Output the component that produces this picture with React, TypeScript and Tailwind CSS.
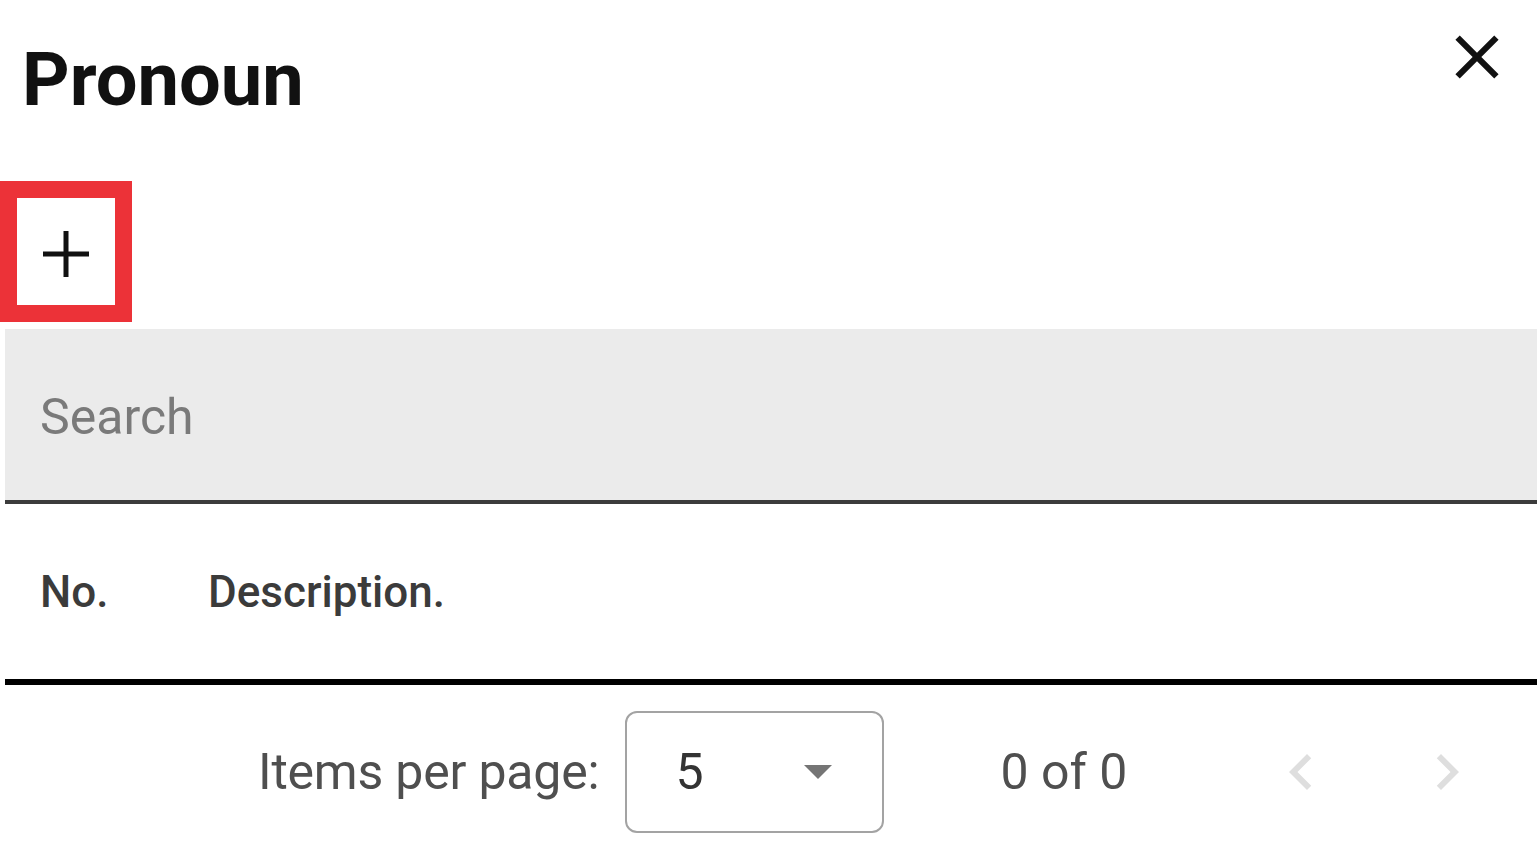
import React from "react";

function CloseIcon() {
  return (
    <svg viewBox="0 0 24 24" className="h-[74px] w-[74px] fill-[#111]">
      <path d="M19 6.41L17.59 5 12 10.59 6.41 5 5 6.41 10.59 12 5 17.59 6.41 19 12 13.41 17.59 19 19 17.59 13.41 12z" />
    </svg>
  );
}

function PlusIcon() {
  return (
    <svg viewBox="0 0 46 46" className="mt-[4px] h-[46px] w-[46px]">
      <path d="M23 0v46M0 23h46" stroke="#111" strokeWidth="5" fill="none" />
    </svg>
  );
}

function Chevron({ dir }: { dir: "left" | "right" }) {
  const d =
    dir === "left"
      ? "M15.41 7.41L14 6l-6 6 6 6 1.41-1.41L10.83 12z"
      : "M10 6L8.59 7.41 13.17 12l-4.58 4.59L10 18l6-6z";
  return (
    <svg viewBox="0 0 24 24" className="h-[72px] w-[72px] fill-[#dedede]">
      <path d={d} />
    </svg>
  );
}

export default function App() {
  return (
    <div className="h-[860px] w-[1537px] overflow-hidden bg-white font-['Roboto','Liberation_Sans',sans-serif]">
      <div className="flex items-start justify-between">
        <h1 className="ml-[22px] mt-[43px] text-[74px] font-bold leading-none text-[#111]">
          Pronoun
        </h1>
        <button type="button" aria-label="Close" className="mr-[23px] mt-[20px]">
          <CloseIcon />
        </button>
      </div>

      <div className="mt-[64px] flex h-[141px] w-[132px] items-center justify-center border-[17px] border-[#ec3238] bg-white">
        <PlusIcon />
      </div>

      <div className="ml-[5px] mt-[7px] flex h-[175px] items-center border-b-[4px] border-[#3c3c3c] bg-[#ebebeb] pl-[35px] pt-[4px]">
        <span className="text-[50px] leading-none text-[#7a7a7a]">Search</span>
      </div>

      <div className="ml-[5px] flex h-[181px] items-center border-b-[6px] border-black pl-[35px] text-[44px] font-medium leading-none text-[#3b3b3b]">
        <span className="w-[168px]">No.</span>
        <span>Description.</span>
      </div>

      <div className="flex items-center pl-[258px] pt-[26px] text-[50px] leading-none text-[#4f4f4f]">
        <span className="tracking-[-0.2px]">Items per page:</span>
        <div className="ml-[26px] flex h-[122px] w-[259px] items-center justify-between rounded-[12px] border-2 border-[#a3a3a3] pl-[48px] pr-[50px]">
          <span className="text-[#333]">5</span>
          <span className="h-0 w-0 border-x-[14px] border-t-[14px] border-x-transparent border-t-[#757575]" />
        </div>
        <span className="ml-[116px]">0 of 0</span>
        <div className="ml-[138px] flex gap-[74px]">
          <Chevron dir="left" />
          <Chevron dir="right" />
        </div>
      </div>
    </div>
  );
}
